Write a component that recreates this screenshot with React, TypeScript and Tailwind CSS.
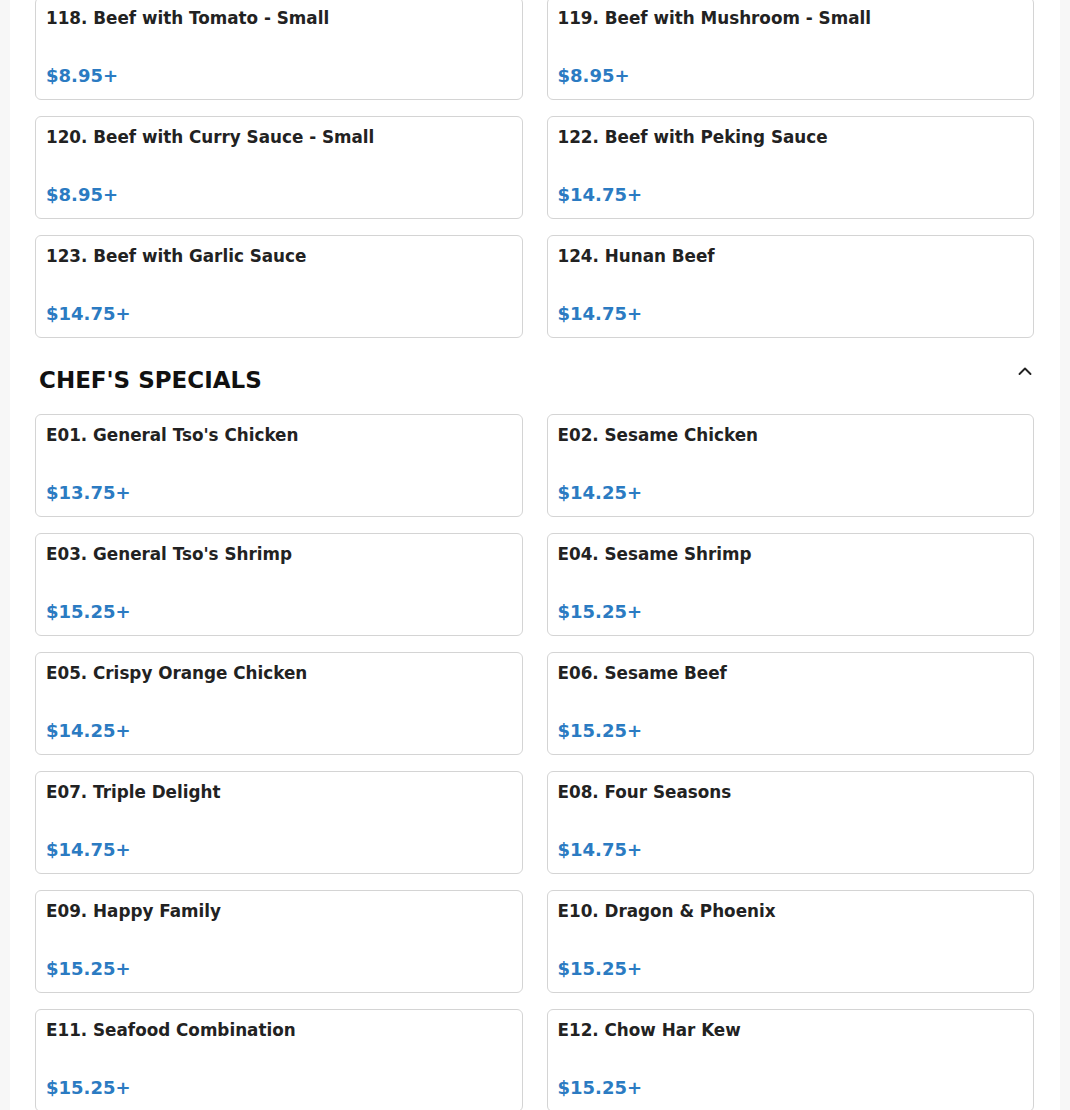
import React from "react";

type Item = { name: string; price: string };

const beef: Item[] = [
  { name: "118. Beef with Tomato - Small", price: "$8.95+" },
  { name: "119. Beef with Mushroom - Small", price: "$8.95+" },
  { name: "120. Beef with Curry Sauce - Small", price: "$8.95+" },
  { name: "122. Beef with Peking Sauce", price: "$14.75+" },
  { name: "123. Beef with Garlic Sauce", price: "$14.75+" },
  { name: "124. Hunan Beef", price: "$14.75+" },
];

const chef: Item[] = [
  { name: "E01. General Tso's Chicken", price: "$13.75+" },
  { name: "E02. Sesame Chicken", price: "$14.25+" },
  { name: "E03. General Tso's Shrimp", price: "$15.25+" },
  { name: "E04. Sesame Shrimp", price: "$15.25+" },
  { name: "E05. Crispy Orange Chicken", price: "$14.25+" },
  { name: "E06. Sesame Beef", price: "$15.25+" },
  { name: "E07. Triple Delight", price: "$14.75+" },
  { name: "E08. Four Seasons", price: "$14.75+" },
  { name: "E09. Happy Family", price: "$15.25+" },
  { name: "E10. Dragon & Phoenix", price: "$15.25+" },
  { name: "E11. Seafood Combination", price: "$15.25+" },
  { name: "E12. Chow Har Kew", price: "$15.25+" },
];

function Card({ item }: { item: Item }) {
  return (
    <div className="flex h-[103px] flex-col rounded-[6px] border border-[#d4d4d4] bg-white px-[10px] pt-[10px] pb-[13px]">
      <div className="text-[16.8px] font-bold leading-[20px] text-[#222222]">{item.name}</div>
      <div className="mt-auto text-[18px] font-bold leading-[21px] text-[#2b7bc2]">{item.price}</div>
    </div>
  );
}

function Grid({ items }: { items: Item[] }) {
  return (
    <div className="grid grid-cols-2 gap-x-[24px] gap-y-[16px]">
      {items.map((it) => (
        <Card key={it.name} item={it} />
      ))}
    </div>
  );
}

export default function App() {
  return (
    <div
      className="min-h-screen bg-[#f7f7f7] px-[10px]"
      style={{ fontFamily: '"DejaVu Sans", Verdana, sans-serif' }}
    >
      <div className="min-h-[1110px] bg-white pl-[25px] pr-[26px]">
        <div className="-mt-[3px]">
          <Grid items={beef} />
        </div>
        <div className="mt-[28px] mb-[20px] flex items-start justify-between">
          <h2 className="pl-[4px] text-[23px] font-bold leading-[28px] text-[#111111]">
            CHEF'S SPECIALS
          </h2>
          <svg width="16" height="16" viewBox="0 0 16 16" fill="none" className="mr-[1px] -mt-[3px]">
            <path d="M2.5 11 L8 5.5 L13.5 11" stroke="#222" strokeWidth="1.9" strokeLinecap="round" strokeLinejoin="round" />
          </svg>
        </div>
        <Grid items={chef} />
      </div>
    </div>
  );
}
